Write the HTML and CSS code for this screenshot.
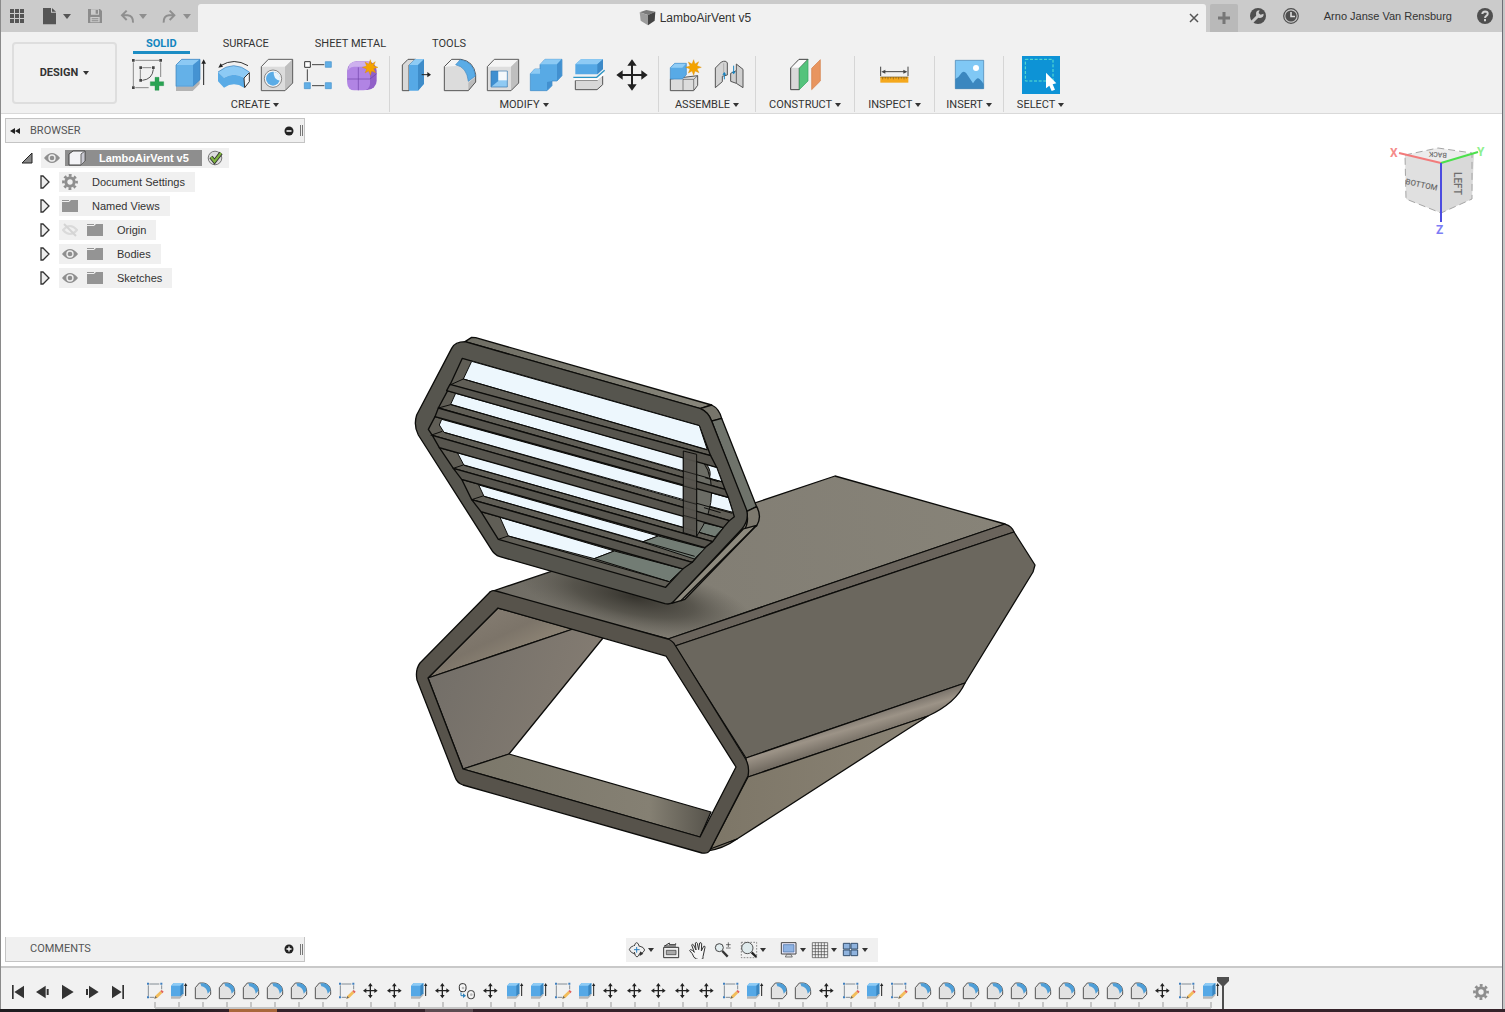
FILE: index.html
```html
<!DOCTYPE html>
<html lang="en">
<head>
<meta charset="utf-8">
<title>LamboAirVent v5</title>
<link rel="stylesheet" href="styles.css">
</head>
<body>
<svg class="defs" aria-hidden="true">
  <symbol id="t-sketch" viewBox="435 153 60 60">
    <path d="M448 162h30M445 166v33M449 202h14M485 166v12" fill="none" stroke="#4d5a66" stroke-width="2"/>
    <path d="M441 158h6v6h-6zM481 158h6v6h-6zM441 199h6v6h-6z" fill="#3f7fbf"/>
    <path d="M463 206l3-9 15-14 6 6-15 15z" fill="#f3bd5b"/><path d="M481 183l4-3 6 5-4 5z" fill="#e0605a"/><path d="M463 206l3-8 5 5z" fill="#666"/>
  </symbol>
  <symbol id="t-extrude" viewBox="507 153 60 60">
    <path d="M513 199v7h27l10-10v-7l-10 10z" fill="#b8b8b8"/>
    <path d="M513 167l8-8h29v31l-9 9h-28z" fill="#55a8e6"/><path d="M513 167l8-8h29l-9 8z" fill="#8ecbf5"/><path d="M541 167l9-8v31l-9 9z" fill="#3a86c0"/>
    <path d="M557 198v-32" stroke="#222" stroke-width="3"/><path d="M552 168l5-9 5 9z" fill="#222"/>
  </symbol>
  <symbol id="t-fillet" viewBox="579 153 60 60">
    <path d="M586 173l12-14h12c14 2 22 12 22 25v9l-12 13h-34z" fill="#e2e2e2" stroke="#555" stroke-width="3" stroke-linejoin="round"/>
    <path d="M601 160h10c14 2 20 11 20 22l-8 9c-1-13-8-20-19-22z" fill="#4f9fd8"/>
  </symbol>
  <symbol id="t-move" viewBox="1083 153 60 60">
    <path d="M1111 166v33M1095 182h33" stroke="#222" stroke-width="4"/>
    <path d="M1111 159l7 10h-14zM1111 205l7-10h-14zM1089 182l10-7v14zM1133 182l-10-7v14z" fill="#222"/>
  </symbol>
  <symbol id="t-joint" viewBox="201 33 60 60">
    <rect x="208" y="41" width="20" height="24" rx="8" fill="#f6f6f6" stroke="#333" stroke-width="3"/><circle cx="219" cy="54" r="4" fill="#bbb"/>
    <rect x="233" y="62" width="20" height="24" rx="8" fill="#f6f6f6" stroke="#333" stroke-width="3"/><circle cx="244" cy="74" r="4" fill="#bbb"/>
    <path d="M213 67v10h8" fill="none" stroke="#2a7fb8" stroke-width="3"/><path d="M219 70l9 7-9 7z" fill="#2a7fb8"/>
  </symbol>
  <symbol id="i-eye" viewBox="0 0 16 16">
    <path d="M0 8q8-10 16 0-8 10-16 0z" fill="#8f8f8f"/><circle cx="8" cy="8" r="3" fill="#8f8f8f" stroke="#eee" stroke-width="1.4"/>
  </symbol>
  <symbol id="i-eyeoff" viewBox="0 0 16 16">
    <path d="M1 8q7-8 14 0-7 8-14 0z" fill="none" stroke="#dadada" stroke-width="2"/><path d="M2 2l12 12" stroke="#d4d4d4" stroke-width="2"/>
  </symbol>
  <symbol id="i-folder" viewBox="0 0 16 16"><path d="M0 2h7v1H0zM0 4h7l2-2h7v12H0z" fill="#949494"/></symbol>
  <symbol id="i-gear" viewBox="0 0 16 16">
    <circle cx="8" cy="8" r="4.2" fill="none" stroke="#8e8e8e" stroke-width="3"/>
    <circle cx="8" cy="8" r="6.6" fill="none" stroke="#8e8e8e" stroke-width="2.6" stroke-dasharray="2.8 2.384" stroke-dashoffset="1.4"/>
  </symbol>
  <symbol id="i-closed" viewBox="0 0 10 14"><path d="M1 1h2l6 6-6 6H1z" fill="#eee" stroke="#333" stroke-width="1.3"/></symbol>
</svg>

<div class="app">
  <header class="titlebar">
    <div class="quick">
      <button title="Data panel"><svg width="20" height="24" viewBox="21 12 60 72"><path d="M30 27h12v12H30zM45 27h12v12H45zM60 27h12v12H60zM30 42h12v12H30zM45 42h12v12H45zM60 42h12v12H60zM30 57h12v12H30zM45 57h12v12H45zM60 57h12v12H60z" fill="#555"/></svg></button>
      <button title="File"><svg width="20" height="24" viewBox="117 12 60 72"><path d="M129 24h24v14h15v35h-39zM156 24l12 11h-12z" fill="#555"/></svg><i class="caret big"></i></button>
      <button title="Save"><svg width="20" height="24" viewBox="249 12 60 72"><path d="M264 27h36l6 6v36h-42z" fill="#8c8c8c"/><path d="M273 28h24v16h-24zM271 51h28v16h-28z" fill="#cbcbcb"/><path d="M287 30h7v11h-7zM275 55h20v3h-20zM275 61h20v3h-20z" fill="#8c8c8c"/></svg></button>
      <button title="Undo"><svg width="20" height="24" viewBox="345 12 60 72"><path d="M380 32l-14 14 14 14M367 46h16q17 2 16 22" fill="none" stroke="#8f8f8f" stroke-width="6"/></svg><i class="caret big dim"></i></button>
      <button title="Redo"><svg width="20" height="24" viewBox="477 12 60 72"><path d="M509 32l14 14-14 14M522 46h-15q-17 2-16 22" fill="none" stroke="#8f8f8f" stroke-width="6"/></svg><i class="caret big dim"></i></button>
    </div>
    <div class="doc-tab">
      <div class="doc-title"><svg width="18" height="18" viewBox="760 27 54 54"><path d="M762 37l20-7 27 5-22 10z" fill="#7a7a7a"/><path d="M762 37l25 8v31l-22-14z" fill="#9c9c9c"/><path d="M787 45l22-10-2 27-20 14z" fill="#444"/></svg><span>LamboAirVent v5</span></div>
      <button class="close" title="Close"><svg width="16" height="16" viewBox="0 0 16 16"><path d="M4 4l8 8M12 4l-8 8" stroke="#555" stroke-width="1.5"/></svg></button>
    </div>
    <button class="new-tab" title="New design"><svg width="14" height="14" viewBox="0 0 14 14"><path d="M7 1v12M1 7h12" stroke="#777" stroke-width="3"/></svg></button>
    <div class="account">
      <button title="Extensions"><svg width="20" height="20" viewBox="0 0 20 20"><circle cx="10" cy="10" r="8" fill="#4f4f4f"/><path d="M4 16l6-6" stroke="#cbcbcb" stroke-width="3"/><path d="M15.600 7.800a3.800 3.800 0 1 1-4-3.500l-1 2.800 2 1.700z" fill="#cbcbcb"/></svg></button>
      <button title="Job status"><svg width="20" height="20" viewBox="0 0 20 20"><circle cx="10" cy="10" r="7.300" fill="none" stroke="#4f4f4f" stroke-width="1.200"/><circle cx="10" cy="10" r="5.600" fill="#4f4f4f"/><path d="M10 6v4.500h4" fill="none" stroke="#ddd" stroke-width="1.600"/></svg></button>
      <a class="user" href="#">Arno Janse Van Rensburg</a>
      <button title="Help"><svg width="20" height="20" viewBox="0 0 20 20"><circle cx="10" cy="10" r="8" fill="#4f4f4f"/><path d="M7.300 8q.2-2.600 2.800-2.600 2.700.1 2.600 2.400-.1 1.300-1.400 2.100-1.200.7-1.200 2" fill="none" stroke="#d4d4d4" stroke-width="2"/><path d="M9 13h2v2.200H9z" fill="#d4d4d4"/></svg></button>
    </div>
  </header>

  <section class="ribbon">
    <button class="design">DESIGN <i class="caret"></i></button>
    <div class="tools">
      <nav class="tabs">
        <a class="active" href="#">SOLID</a><a href="#">SURFACE</a><a href="#">SHEET METAL</a><a href="#">TOOLS</a>
      </nav>
      <div class="groups">
        <div class="group">
          <div class="icons">
            <button title="Create Sketch"><svg width="37" height="38" viewBox="387 168 111 114"><path d="M406 181h72M400 187v71M406 263h40M482 187v44M427 203h27M421 208v30" fill="none" stroke="#555" stroke-width="2"/><path d="M460 208q-3 30-33 33" fill="none" stroke="#555" stroke-width="3"/><path d="M396 177h8v8h-8zM478 177h8v8h-8zM396 259h8v8h-8zM418 199h8v8h-8zM456 199h8v8h-8zM418 237h8v8h-8z" fill="#444"/><path d="M465 232h12v13h14v12h-14v14h-12v-14h-14v-12h14z" fill="#2aa353" stroke="#178a40"/></svg></button>
            <button title="Extrude"><svg width="37" height="38" viewBox="516 168 111 114"><path d="M528 261v12h50l21-21v-12l-21 21z" fill="#b3b3b3"/><path d="M528 195l17-17h55v61l-21 20h-51z" fill="#64b1e8"/><path d="M528 195l17-17h55l-21 17z" fill="#8bc9f4"/><path d="M579 195l21-17v61l-21 20z" fill="#4593d2"/><path d="M528 195l17-17h55v61l-21 20h-51z" fill="none" stroke="#3a7fba" stroke-width="2"/><path d="M611 255v-68" stroke="#222" stroke-width="3"/><path d="M604 191l7-13 7 13z" fill="#222"/></svg></button>
            <button title="Revolve"><svg width="37" height="38" viewBox="645 168 111 114"><path d="M662 197q40-25 82 0" fill="none" stroke="#333" stroke-width="3"/><path d="M655 203l7-13 7 10z" fill="#222"/><path d="M654 216q47-38 94 0l-16 17q-30-17-60 0z" fill="#8ccaf5"/><path d="M654 216l18 17q30-17 60 0v30q-30-20-60 0l-18-19z" fill="#5aabe6"/><path d="M654 216q47-38 94 0" fill="none" stroke="#3a7fba" stroke-width="2"/><path d="M732 234l16-16v27l-14 18z" fill="#f6f6f6" stroke="#333" stroke-width="3"/></svg></button>
            <button title="Hole"><svg width="37" height="38" viewBox="774 168 111 114"><path d="M784 200l21-22h73v71l-23 23h-71z" fill="#dcdcdc"/><path d="M784 200l21-22h73l-23 22z" fill="#f5f5f5"/><path d="M855 200l23-22v71l-23 23z" fill="#bfbfbf"/><path d="M784 200l21-22h73v71l-23 23h-71z" fill="none" stroke="#5c5c5c" stroke-width="3"/><circle cx="819" cy="236" r="26" fill="#f4f4f4" stroke="#555" stroke-width="2"/><circle cx="819" cy="236" r="21" fill="#5aace6"/><path d="M821 215q-1 24 19 27 4-22-19-27z" fill="#e8f4fc"/></svg></button>
            <button title="Pattern"><svg width="37" height="38" viewBox="903 168 111 114"><path d="M936 194h37M922 208v35M936 257h37" stroke="#444" stroke-width="3"/><path d="M914 185h17v17h-17z" fill="#fff" stroke="#333" stroke-width="3"/><path d="M976 185h18v17h-18zM913 248h18v18h-18zM976 248h18v18h-18z" fill="#62afe6" stroke="#4390cc" stroke-width="2"/></svg></button>
            <button title="Create Form"><svg width="37" height="38" viewBox="1032 168 111 114"><rect x="1042" y="184" width="88" height="86" rx="28" fill="#9160c8"/><path d="M1043 212q2-28 30-28h36l-4 22h-54z" fill="#cdb0ee"/><rect x="1042" y="200" width="68" height="71" rx="20" fill="#b184e4"/><path d="M1075 202v69M1042 237h68l20-16" fill="none" stroke="#6f42a8" stroke-width="2"/><path d="M1111 179l4 13 11-7-5 12 13 5-13 4 6 12-12-5-4 13-5-13-11 6 5-12-13-5 13-4-5-12 11 6z" fill="#f4a300" stroke="#d98a00"/></svg></button>
          </div>
          <button class="label">CREATE <i class="caret"></i></button>
        </div>
        <div class="group">
          <div class="icons">
            <button title="Press Pull"><svg width="37" height="38" viewBox="39 168 111 114"><path d="M52 195l17-17h22l-19 17v77H52z" fill="#d9d9d9" stroke="#555" stroke-width="3"/><path d="M72 195l18-17h27v73l-18 21H72z" fill="#56a9e6"/><path d="M72 195l18-17h27l-18 17z" fill="#8dcbf5"/><path d="M99 195l18-17v73l-18 21z" fill="#3e8cc9"/><path d="M110 224h20" stroke="#222" stroke-width="3"/><path d="M127 216l11 8-11 8z" fill="#222"/></svg></button>
            <button title="Fillet"><svg width="37" height="38" viewBox="168 168 111 114"><path d="M178 200l22-22h28q38 6 44 46v22l-22 26h-72z" fill="#dcdcdc"/><path d="M178 200l22-22h16q14 6-4 20z" fill="#f5f5f5"/><path d="M250 248l22-18v16l-22 26z" fill="#bbb"/><path d="M178 200l22-22h28q38 6 44 46v22l-22 26h-72z" fill="none" stroke="#555" stroke-width="3"/><path d="M226 179q40 6 45 49l-21 16q-4-42-38-50z" fill="#5aace6" stroke="#3a86c4" stroke-width="2"/></svg></button>
            <button title="Shell"><svg width="37" height="38" viewBox="297 168 111 114"><path d="M307 200l21-22h73v71l-23 23h-71z" fill="#dedede"/><path d="M307 200l21-22h73l-23 22z" fill="#f5f5f5"/><path d="M378 200l23-22v71l-23 23z" fill="#bfbfbf"/><path d="M307 200l21-22h73v71l-23 23h-71z" fill="none" stroke="#5c5c5c" stroke-width="3"/><path d="M318 213h49v48h-49z" fill="#8fcaf3"/><path d="M318 213h22v30l-22 18z" fill="#3f8fd0"/><path d="M340 213h27v28h-27z" fill="#f4f8fb"/><path d="M318 213h49v48h-49z" fill="none" stroke="#3676ac" stroke-width="2"/></svg></button>
            <button title="Combine"><svg width="37" height="38" viewBox="426 168 111 114"><path d="M436 221l13-14h16v-13l15-16h51v49l-15 16h-15v14l-15 15h-50z" fill="#58aae5" stroke="#3a86c4" stroke-width="2"/><path d="M436 221l13-14h16v14zM466 193l14-15h50l-14 15z" fill="#8ccaf4"/><path d="M516 193l14-15v49l-14 15zM486 246l15-3v13l-15 15z" fill="#4290cf"/></svg></button>
            <button title="Split Body"><svg width="37" height="38" viewBox="555 168 111 114"><path d="M571 193l17-15h66v29l-17 16h-66z" fill="#55a8e5"/><path d="M571 193l17-15h66l-17 15z" fill="#8ecbf5"/><path d="M637 193l17-15v29l-17 16z" fill="#3d8ac8"/><path d="M571 241h66l16-14v27l-17 15h-65z" fill="#d8d8d8" stroke="#555" stroke-width="3"/><path d="M567 238h71l20-18" fill="none" stroke="#fff" stroke-width="5"/><path d="M565 232h70l24-21" fill="none" stroke="#2b94c4" stroke-width="4"/></svg></button>
            <button title="Move/Copy"><svg width="37" height="38" viewBox="684 168 111 114"><path d="M741 190v70M706 225h70" stroke="#222" stroke-width="6"/><path d="M741 178l14 19h-28zM741 272l14-19h-28zM694 225l19-14v28zM788 225l-19-14v28z" fill="#222"/></svg></button>
          </div>
          <button class="label">MODIFY <i class="caret"></i></button>
        </div>
        <div class="group">
          <div class="icons">
            <button title="New Component"><svg width="37" height="38" viewBox="846 168 111 114"><path d="M856 237l82-10v29l-12 16h-70z" fill="#dcdcdc" stroke="#555" stroke-width="3"/><path d="M894 237v34M894 238h32l12-11M926 238v32" fill="none" stroke="#555" stroke-width="2"/><path d="M856 203l13-13h35v34l-12 13h-36z" fill="#58aae6" stroke="#3b85c2" stroke-width="2"/><path d="M857 203l12-12h34l-11 12z" fill="#90ccf5"/><path d="M926 179l4 13 11-7-5 12 13 5-13 4 6 12-12-5-4 13-5-13-11 6 5-12-13-5 13-4-5-12 11 6z" fill="#f4a300" stroke="#d98a00"/></svg></button>
            <button title="Joint"><svg width="37" height="38" viewBox="975 168 111 114"><path d="M991 204l18-18q14-6 18 3v36l-15 4v16l-21 18z" fill="#d4d4d4" stroke="#555" stroke-width="3"/><path d="M1016 190v38" stroke="#999" stroke-width="2"/><path d="M1074 263v-55l-20-16v20l-17 8v24l17 6z" fill="#cfcfcf" stroke="#555" stroke-width="3"/><path d="M1054 212v38" stroke="#666" stroke-width="3"/><path d="M1018 238v-18M1046 197v22" stroke="#1683c0" stroke-width="3"/><path d="M1012 224l6-8 6 8zM1040 215l6 8 6-8z" fill="#1683c0"/></svg></button>
          </div>
          <button class="label">ASSEMBLE <i class="caret"></i></button>
        </div>
        <div class="group narrow">
          <div class="icons">
            <button title="Offset Plane"><svg width="37" height="38" viewBox="110 168 111 114"><path d="M121 204l25-26h27l-26 26v65h-26z" fill="#d9d9d9" stroke="#444" stroke-width="3"/><path d="M123 203l24-23h22l-22 23z" fill="#fafafa"/><path d="M147 205l26-26v64l-26 26z" fill="#54c37c" stroke="#35a55f" stroke-width="2"/><path d="M184 205l26-26v64l-26 26z" fill="#e8955f" stroke="#d37c45" stroke-width="2"/></svg></button>
          </div>
          <button class="label">CONSTRUCT <i class="caret"></i></button>
        </div>
        <div class="group narrow">
          <div class="icons">
            <button title="Measure"><svg width="37" height="38" viewBox="377 168 111 114"><path d="M391 200v28M473 200v28M398 215h68" stroke="#444" stroke-width="3"/><path d="M393 215l12-6v12zM471 215l-12-6v12z" fill="#444"/><path d="M390 231h84v17h-84z" fill="#f5a81c"/><path d="M390 231h84M397 231v7M405 231v5M413 231v7M421 231v5M429 231v7M437 231v5M445 231v7M453 231v5M461 231v7M468 231v5" stroke="#7a5a20" stroke-width="2"/></svg></button>
          </div>
          <button class="label">INSPECT <i class="caret"></i></button>
        </div>
        <div class="group snug">
          <div class="icons">
            <button title="Insert"><svg width="37" height="38" viewBox="597 168 111 114"><path d="M610 181h85v85h-85z" fill="#80c8f5"/><path d="M610 237q11-6 19-19 8-6 14 2l20 30q9-14 14-15 7 0 18 17v14h-85z" fill="#3b87bf"/><circle cx="672" cy="204" r="9" fill="#fff"/><path d="M610 181h85v85h-85z" fill="none" stroke="#3f7fae" stroke-width="2"/></svg></button>
          </div>
          <button class="label">INSERT <i class="caret"></i></button>
        </div>
        <div class="group narrow">
          <div class="icons">
            <button class="selected" title="Select"><svg width="38" height="38" viewBox="813 168 114 114"><path d="M823 178h83v65h-83z" fill="none" stroke="#5fe3cf" stroke-width="3" stroke-dasharray="9 5"/><path d="M885 218v47l10-8 7 16 10-4-7-16 11-3z" fill="#fff"/></svg></button>
          </div>
          <button class="label">SELECT <i class="caret"></i></button>
        </div>
      </div>
    </div>
  </section>

  <main class="canvas">
    <svg class="model" viewBox="1 114 1501 852" role="img" aria-label="Air vent model">
      <defs>
        <linearGradient id="m-top" gradientUnits="userSpaceOnUse" x1="500" y1="600" x2="1000" y2="520"><stop offset="0" stop-color="#6f6c64"/><stop offset=".4" stop-color="#827e74"/><stop offset="1" stop-color="#878378"/></linearGradient>
        <radialGradient id="m-shade"><stop offset="0" stop-color="#33312b" stop-opacity=".95"/><stop offset=".5" stop-color="#3f3d36" stop-opacity=".6"/><stop offset="1" stop-color="#55524b" stop-opacity="0"/></radialGradient>
        <linearGradient id="m-bevel" gradientUnits="userSpaceOnUse" x1="840" y1="717" x2="848" y2="744"><stop offset="0" stop-color="#6d6760"/><stop offset=".5" stop-color="#9c9387"/><stop offset="1" stop-color="#756e64"/></linearGradient>
        <linearGradient id="m-under" x1="0" y1="0" x2="1" y2="0"><stop offset="0" stop-color="#7d7667"/><stop offset="1" stop-color="#8a8375"/></linearGradient>
        <linearGradient id="m-in1" x1="0" y1="0" x2="1" y2="1"><stop offset="0" stop-color="#8b8378"/><stop offset=".45" stop-color="#7c7469"/><stop offset=".6" stop-color="#898072"/><stop offset="1" stop-color="#8a8175"/></linearGradient>
        <linearGradient id="m-in2" x1="0" y1="0" x2="1" y2=".3"><stop offset="0" stop-color="#716d67"/><stop offset="1" stop-color="#847c72"/></linearGradient>
        <linearGradient id="m-in3" x1="0" y1="0" x2="1" y2="0"><stop offset="0" stop-color="#7b776a"/><stop offset=".75" stop-color="#858073"/><stop offset="1" stop-color="#56534b"/></linearGradient>
        <linearGradient id="v-top" x1="0" y1="0" x2="1" y2="0"><stop offset="0" stop-color="#6f6e64"/><stop offset="1" stop-color="#88867b"/></linearGradient>
        <clipPath id="m-clip"><path d="M490 592L835 476l170 48-337 115z"/></clipPath>
      </defs>
      <g stroke="#0c0c0a" stroke-width="1.300" stroke-linejoin="round">
        <path d="M490 592L835 476l170 48-337 115z" fill="url(#m-top)"/>
        <g clip-path="url(#m-clip)" stroke="none"><ellipse cx="634" cy="597" rx="122" ry="34" transform="rotate(12 634 597)" fill="url(#m-shade)"/></g>
        <path d="M668 639l337-115q7 2 9 8L675 646z" fill="#6a645c"/>
        <path d="M675 646l339-114 21 33-2 7-68 111-219 75z" fill="#6b675e"/>
        <path d="M746 758l219-75q-9 20-37 33l-180 61z" fill="url(#m-bevel)"/>
        <path d="M748 777l180-61-191 123-27 11z" fill="url(#m-under)"/>
        <path d="M710 849l27-10q-14 10-30 12z" fill="#777064"/>
        <path d="M498 608l75 21-145 49z" fill="url(#m-in1)"/>
        <path d="M428 678l145-49 30 9-94 116-46 15z" fill="url(#m-in2)"/>
        <path d="M463 769l46-15 202 58-11 25z" fill="url(#m-in3)"/>
        <path fill-rule="evenodd" fill="#57534b" d="M420 663l70-71q2-2 6-1l172 48q5 2 7 6l70 113q5 8 3 18l-38 74q-2 4-8 3l-239-68q-6-2-8-8l-38-97q-2-10 3-17zM498 608l-70 70 35 91 237 68 36-70-70-111z"/>
      </g>
      <g transform="translate(400 325) scale(.3333)" stroke="#0c0c0a" stroke-width="4" stroke-linejoin="round">
        <path d="M195 50l20-13 12 1 708 202-35 11z" fill="url(#v-top)"/>
        <path d="M900 251l35-11q22 10 30 40l-30 10q-7-28-35-39z" fill="#77756b"/>
        <path d="M935 288l30-8 105 265-31 15z" fill="#6f736b"/>
        <path d="M1039 560l31-15q17 30 0 58l-38 15q17-30 7-58z" fill="#7d796e"/>
        <path d="M1030 612l40-11-215 222-40 12z" fill="#8d897d"/>
        <path d="M1070 601L842 828" fill="none"/>
        <path fill="#56554e" d="M155 70q10-20 40-20l705 200q25 10 35 38l105 267q8 32-15 58L820 830q-8 10-25 6L300 695q-17-5-28-25L55 330q-15-28-5-60z"/>
        <g fill="#605e56">
          <path d="M187 100l711 202 34 90L150 180z"/><path d="M143 197l807 230 25 66L115 249z"/><path d="M105 275l880 242 18 58-15 12L97 331l-12-18z"/>
          <path d="M118 368l852 240-32 42L160 430z"/><path d="M185 463l730 205-38 44-662-188z"/><path d="M243 560l605 172-51 55-502-144z"/>
        </g>
        <g fill="#edf7fd" stroke-width="3">
          <path d="M215 109l683 193 24 72L190 162z"/><path d="M167 205l683 193v42L152 238z"/><path d="M125 283l725 200v44L132 322l-14-22z"/>
          <path d="M172 383l678 186v38L192 421z"/><path d="M236 480l539 153-48 18-475-137z"/><path d="M300 577l343 101-60 23-258-68z"/>
          <path d="M920 418l30 9 16 43-38-10q8-20-8-42zM935 504l50 14 14 44-73-19z"/>
        </g>
        <g fill="#727c74" stroke-width="3">
          <path d="M775 633l140 37-32 32-156-51z"/><path d="M643 678l205 54-40 38-225-69z"/><path d="M912 594l58 14-25 28-48-14z"/>
        </g>
        <path d="M890 388q44 40 45 110t-45 136z" fill="#6c6d66" stroke-width="3"/>
        <g fill="#57554e">
          <path d="M140 197l10-19 782 214 18 35z"/><path d="M105 275l10-26 860 244 10 24z"/><path d="M118 368l-21-37 891 256-18 21z"/>
          <path d="M185 463l-25-33 778 220-23 18z"/><path d="M243 560l-28-36 662 188-29 20z"/>
        </g>
        <path d="M190 162l732 213M152 239l815 232M132 322l865 243M192 420l700 200M252 514l632 180M325 633l482 137M150 180l40-18M115 249l37-10M92 331l35-12M160 430l30-10M215 524l37-12M295 643l30-10M915 458l40 12M912 548l50 15M897 622l50 14" fill="none" stroke-width="3"/>
        <path d="M850 378l40 10v247l-40-12z" fill="#57554e" fill-opacity=".92" stroke-width="3"/>
        <path d="M850 438l40 11M850 483l40 11M850 527l40 11M850 571l40 11" fill="none" stroke-width="2"/>
      </g>
    </svg>

    <svg class="cube" width="110" height="100" viewBox="1385 140 110 100" role="img" aria-label="View cube">
      <path d="M1405 155l33-7 36 6-33 9z" fill="#ececec"/><path d="M1405 155l36 8v50l-35-14z" fill="#e0e0e0"/><path d="M1441 163l33-10-2 46-31 14z" fill="#d9d9d9"/>
      <path d="M1405 155l33-7 34 5v46l-31 14-35-14z" fill="none" stroke="#a5a5a5" stroke-dasharray="7 4"/>
      <path d="M1399 153l42 10" stroke="#f27b7b" stroke-width="2"/><path d="M1441 163l37-11" stroke="#4ce04c" stroke-width="2"/><path d="M1441 163v59" stroke="#4c4ce0" stroke-width="2"/>
      <g class="cube-text"><text x="1405" y="184" font-size="8" transform="rotate(12 1405 184)">BOTTOM</text><text x="1454" y="172" font-size="10" transform="rotate(90 1454 172)">LEFT</text><text x="1447" y="153" font-size="7" transform="rotate(184 1447 153)">BACK</text></g>
      <g class="axis-text"><text x="1390" y="157" fill="#f58b8b">X</text><text x="1477" y="156" fill="#8df08d">Y</text><text x="1436" y="234" fill="#7d7df5">Z</text></g>
    </svg>

    <aside class="browser">
      <div class="panel-head">
        <button title="Collapse"><svg width="12" height="10" viewBox="0 0 12 10"><path d="M6 2v6L1 5zM11 2v6L6 5z" fill="#222"/></svg></button>
        <h2>BROWSER</h2>
        <button title="Hide"><svg width="10" height="10" viewBox="0 0 10 10"><circle cx="5" cy="5" r="4.500" fill="#222"/><path d="M2.500 5h5" stroke="#fff" stroke-width="1.500"/></svg></button>
        <i class="grip"></i>
      </div>
      <ul class="tree">
        <li class="root"><svg width="12" height="12" viewBox="0 0 12 12"><path d="M11 1v10H1z" fill="#888" stroke="#222"/></svg>
          <span class="node"><svg width="16" height="16"><use href="#i-eye"/></svg><span class="picked"><svg width="18" height="16" viewBox="0 0 18 16"><path d="M1 4l4-3h12v10l-4 4H1z" fill="#f3f3f6" stroke="#444"/><path d="M13 4l4-3v10l-4 4z" fill="#c9c9d2" stroke="#666"/></svg><b>LamboAirVent v5</b></span><svg width="16" height="16" viewBox="0 0 16 16"><circle cx="8" cy="8" r="6.800" fill="#dcdcdc" stroke="#777"/><path d="M4 7l3.500 4.500L14 3" fill="none" stroke="#333" stroke-width="4"/><path d="M4 7l3.500 4.500L14 3" fill="none" stroke="#7fb53f" stroke-width="2.200"/></svg></span></li>
        <li><svg width="10" height="14"><use href="#i-closed"/></svg><span class="node"><svg width="16" height="16"><use href="#i-gear"/></svg><span class="name">Document Settings</span></span></li>
        <li><svg width="10" height="14"><use href="#i-closed"/></svg><span class="node"><svg width="16" height="16"><use href="#i-folder"/></svg><span class="name">Named Views</span></span></li>
        <li><svg width="10" height="14"><use href="#i-closed"/></svg><span class="node"><svg width="16" height="16"><use href="#i-eyeoff"/></svg><svg width="16" height="16"><use href="#i-folder"/></svg><span class="name">Origin</span></span></li>
        <li><svg width="10" height="14"><use href="#i-closed"/></svg><span class="node"><svg width="16" height="16"><use href="#i-eye"/></svg><svg width="16" height="16"><use href="#i-folder"/></svg><span class="name">Bodies</span></span></li>
        <li><svg width="10" height="14"><use href="#i-closed"/></svg><span class="node"><svg width="16" height="16"><use href="#i-eye"/></svg><svg width="16" height="16"><use href="#i-folder"/></svg><span class="name">Sketches</span></span></li>
      </ul>
    </aside>

    <section class="comments panel-head">
      <h2>COMMENTS</h2>
      <button title="Show"><svg width="10" height="10" viewBox="0 0 10 10"><circle cx="5" cy="5" r="4.500" fill="#222"/><path d="M2.500 5h5M5 2.500v5" stroke="#fff" stroke-width="1.300"/></svg></button>
      <i class="grip"></i>
    </section>

    <div class="navbar">
      <div class="nav-group">
        <button title="Orbit"><svg width="18" height="18" viewBox="81 33 54 54"><path d="M98 47q-12 4-13 12 4 10 17 13M114 72q15-3 17-12-2-9-16-12" fill="none" stroke="#444" stroke-width="3"/><path d="M100 48q2-10 7-10t8 12M100 66q2 14 8 15 5-2 7-9" fill="none" stroke="#444" stroke-width="3"/><path d="M99 59h17M107 51v17" stroke="#2b80c0" stroke-width="3"/><path d="M117 64l-1 14 11-7z" fill="#333"/></svg><i class="caret"></i></button>
        <button title="Look At"><svg width="18" height="18" viewBox="180 33 54 54"><path d="M185 52h45v31h-45z" fill="#eee" stroke="#333" stroke-width="3"/><path d="M193 61h29v13h-29z" fill="#a9a9a9" stroke="#333" stroke-width="2"/><path d="M188 48l14-9v5h19v-4M186 48h36" fill="none" stroke="#333" stroke-width="3"/></svg></button>
        <button title="Pan"><svg width="18" height="18" viewBox="258 33 54 54"><path d="M276 82q-4-12-13-20 1-6 8-1l6 6-8-22q2-5 6 0l7 15-2-21q4-4 6 1l4 19 3-20q5-3 6 2l-1 22 7-14q5-2 4 3l-6 28v6q-12 8-27-4z" fill="#f6f6f6" stroke="#333" stroke-width="3" stroke-linejoin="round"/></svg></button>
        <button title="Zoom"><svg width="18" height="18" viewBox="336 33 54 54"><circle cx="352" cy="53" r="12" fill="#e4eef0" stroke="#444" stroke-width="3"/><path d="M361 63l16 17" stroke="#333" stroke-width="7"/><path d="M372 44h14M379 37v14M372 54h14" stroke="#333" stroke-width="2"/></svg></button>
        <button title="Zoom Window"><svg width="18" height="18" viewBox="414 33 54 54"><path d="M418 37h46v46h-46z" fill="none" stroke="#555" stroke-width="2" stroke-dasharray="5 4"/><circle cx="436" cy="54" r="17" fill="#dfeaec" stroke="#555" stroke-width="3"/><path d="M449 67l14 14" stroke="#222" stroke-width="7"/></svg><i class="caret"></i></button>
      </div>
      <div class="nav-group tight">
        <button title="Display Settings"><svg width="18" height="18" viewBox="537 33 54 54"><path d="M541 38h44v34h-44z" fill="#eef" stroke="#444" stroke-width="3"/><path d="M547 44h32v22h-32z" fill="#8fb3e3" stroke="#446a9e" stroke-width="2"/><path d="M557 73h13l4 8h-21z" fill="#ddd" stroke="#444" stroke-width="2"/></svg><i class="caret"></i></button>
        <button title="Grid and Snaps"><svg width="18" height="18" viewBox="630 33 54 54"><path d="M634 38h46v45h-46zM634 47h46M634 56h46M634 65h46M634 74h46M643 38v45M652 38v45M661 38v45M670 38v45" fill="#f3f3f3" stroke="#444" stroke-width="2"/></svg><i class="caret"></i></button>
        <button title="Viewports"><svg width="18" height="18" viewBox="723 33 54 54"><path d="M727 40h20v17h-20zM750 40h20v17h-20zM727 60h20v17h-20zM750 60h20v17h-20z" fill="#8fb3de" stroke="#35506f" stroke-width="3"/></svg><i class="caret"></i></button>
      </div>
    </div>
  </main>

  <footer class="timeline">
    <div class="playback">
      <button title="Go to start"><svg width="25" height="20" viewBox="15 156 75 60"><path d="M36 165h5v42h-5zM72 167v38l-29-19z" fill="#333"/></svg></button>
      <button title="Step back"><svg width="25" height="20" viewBox="90 156 75 60"><path d="M137 167v38l-29-19zM140 177h6v18h-6z" fill="#333"/></svg></button>
      <button title="Play"><svg width="25" height="20" viewBox="165 156 75 60"><path d="M186 164v44l35-22z" fill="#333"/></svg></button>
      <button title="Step forward"><svg width="25" height="20" viewBox="240 156 75 60"><path d="M267 167v38l29-19zM258 177h6v18h-6z" fill="#333"/></svg></button>
      <button title="Go to end"><svg width="25" height="20" viewBox="315 156 75 60"><path d="M367 165h5v42h-5zM336 167v38l29-19z" fill="#333"/></svg></button>
    </div>
    <ol class="ops">
      <li><svg><use href="#t-sketch"/></svg></li>
      <li><svg><use href="#t-extrude"/></svg></li>
      <li><svg><use href="#t-fillet"/></svg></li>
      <li><svg><use href="#t-fillet"/></svg></li>
      <li><svg><use href="#t-fillet"/></svg></li>
      <li><svg><use href="#t-fillet"/></svg></li>
      <li><svg><use href="#t-fillet"/></svg></li>
      <li><svg><use href="#t-fillet"/></svg></li>
      <li><svg><use href="#t-sketch"/></svg></li>
      <li><svg><use href="#t-move"/></svg></li>
      <li><svg><use href="#t-move"/></svg></li>
      <li><svg><use href="#t-extrude"/></svg></li>
      <li><svg><use href="#t-move"/></svg></li>
      <li><svg><use href="#t-joint"/></svg></li>
      <li><svg><use href="#t-move"/></svg></li>
      <li><svg><use href="#t-extrude"/></svg></li>
      <li><svg><use href="#t-extrude"/></svg></li>
      <li><svg><use href="#t-sketch"/></svg></li>
      <li><svg><use href="#t-extrude"/></svg></li>
      <li><svg><use href="#t-move"/></svg></li>
      <li><svg><use href="#t-move"/></svg></li>
      <li><svg><use href="#t-move"/></svg></li>
      <li><svg><use href="#t-move"/></svg></li>
      <li><svg><use href="#t-move"/></svg></li>
      <li><svg><use href="#t-sketch"/></svg></li>
      <li><svg><use href="#t-extrude"/></svg></li>
      <li><svg><use href="#t-fillet"/></svg></li>
      <li><svg><use href="#t-fillet"/></svg></li>
      <li><svg><use href="#t-move"/></svg></li>
      <li><svg><use href="#t-sketch"/></svg></li>
      <li><svg><use href="#t-extrude"/></svg></li>
      <li><svg><use href="#t-sketch"/></svg></li>
      <li><svg><use href="#t-fillet"/></svg></li>
      <li><svg><use href="#t-fillet"/></svg></li>
      <li><svg><use href="#t-fillet"/></svg></li>
      <li><svg><use href="#t-fillet"/></svg></li>
      <li><svg><use href="#t-fillet"/></svg></li>
      <li><svg><use href="#t-fillet"/></svg></li>
      <li><svg><use href="#t-fillet"/></svg></li>
      <li><svg><use href="#t-fillet"/></svg></li>
      <li><svg><use href="#t-fillet"/></svg></li>
      <li><svg><use href="#t-fillet"/></svg></li>
      <li><svg><use href="#t-move"/></svg></li>
      <li><svg><use href="#t-sketch"/></svg></li>
      <li><svg><use href="#t-extrude"/></svg></li>
    </ol>
    <svg class="marker" width="12" height="32" viewBox="0 0 12 32"><path d="M0 0h12v4L7 9v23H5V9L0 4z" fill="#4f4f4f"/></svg>
    <button class="settings" title="Timeline settings"><svg width="16" height="16"><use href="#i-gear"/></svg></button>
  </footer>
</div>
<div class="desk"></div>
</body>
</html>
```

FILE: styles.css
```css
* { box-sizing: border-box; }

body {
  margin: 0;
  min-height: 100vh;
  display: flex;
  flex-direction: column;
  background: #c6c6c6;
  color: #333;
  font: 11px/14px "Liberation Sans", Arial, sans-serif;
}

button {
  display: flex;
  align-items: center;
  justify-content: center;
  padding: 0;
  border: 0;
  background: none;
  color: inherit;
  font: inherit;
}

a { color: inherit; text-decoration: none; }
ul, ol { margin: 0; padding: 0; list-style: none; }
h2 { margin: 0; font: inherit; }
svg { display: block; flex: none; }
.defs { position: absolute; width: 0; height: 0; }

.app {
  flex: 1;
  display: flex;
  flex-direction: column;
  margin-right: 2px;
  border-left: 1px solid #8a8a8a;
  border-right: 1px solid #6e6e76;
  background: #fff;
}

.caret {
  border: 3px solid transparent;
  border-top: 4px solid #333;
  border-bottom: 0;
}
.caret.big { border-width: 5px 4px 0; border-top-color: #555; }
.caret.dim { border-top-color: #8f8f8f; }

/* Title bar */
.titlebar {
  display: flex;
  height: 32px;
  padding-top: 4px;
  background: #cbcbcb;
}
.quick {
  display: flex;
  gap: 12px;
  padding: 0 7px 4px 6px;
}
.quick button { gap: 4px; }
.doc-tab {
  flex: 1;
  display: flex;
  align-items: center;
  padding: 0 4px 0 6px;
  border-radius: 3px 3px 0 0;
  background: #f1f1f1;
}
.doc-title {
  flex: 1;
  display: flex;
  align-items: center;
  justify-content: center;
  gap: 3px;
  font-size: 12px;
}
.new-tab {
  width: 28px;
  margin-left: 4px;
  background: #b9b9b9;
  border-radius: 2px 2px 0 0;
}
.account {
  display: flex;
  align-items: center;
  gap: 13px;
  padding: 0 7px 4px 10px;
}
.user { padding: 0 10px; }

/* Ribbon */
.ribbon {
  display: flex;
  gap: 4px;
  height: 82px;
  padding-left: 11px;
  border-bottom: 1px solid #d9d9d9;
  background: #f1f1f1;
  font-family: Roboto, "Liberation Sans", sans-serif;
}
.design {
  gap: 5px;
  width: 105px;
  height: 62px;
  margin-top: 10px;
  border: 2px solid #dedede;
  border-radius: 4px;
  font-weight: 700;
}
.tabs {
  display: flex;
  gap: 20px;
  height: 22px;
  padding-left: 12px;
}
.tabs a { padding: 5px 13px 0; }
.tabs .active {
  border-bottom: 3px solid #1c8dc4;
  color: #1486c0;
  font-weight: 700;
}
.groups { display: flex; padding-top: 2px; }
.group {
  display: flex;
  flex-direction: column;
  align-items: center;
  gap: 4px;
  padding: 0 5px;
  border-right: 1px solid #d6d6d6;
}
.group:last-child { border-right: 0; }
.icons { display: flex; }
.icons button { width: 43px; height: 38px; }
.icons .selected { width: 38px; background: #0d93d6; }
.label { gap: 3px; height: 14px; }
.narrow .label { padding: 0 8px; }
.snug .label { padding: 0 6px; }

/* Canvas */
.canvas { position: relative; flex: 1; }
.model { position: absolute; inset: 0; width: 100%; height: 100%; }
.cube { position: absolute; top: 26px; right: 7px; }
.cube-text { fill: #6e6e6e; font-family: Roboto, sans-serif; font-weight: 500; }
.axis-text { font: bold 12px Roboto, sans-serif; }

.browser { position: absolute; top: 4px; left: 4px; width: 300px; }
.panel-head {
  display: flex;
  align-items: center;
  height: 25px;
  padding: 0 1px 0 3px;
  border: 1px solid #c4c4c4;
  background: #f0f0f0;
  color: #555;
  font-family: Roboto, "Liberation Sans", sans-serif;
}
.panel-head h2 { flex: 1; padding-left: 9px; }
.grip {
  width: 3px;
  height: 11px;
  margin-left: 6px;
  border: 1px solid #777;
  border-width: 0 1px;
}
.comments {
  position: absolute;
  bottom: 4px;
  left: 4px;
  width: 300px;
  border-top: 0;
}
.comments h2 { padding-left: 21px; }

.tree {
  display: flex;
  flex-direction: column;
  gap: 4px;
  padding-top: 5px;
}
.tree li {
  display: flex;
  align-items: center;
  gap: 9px;
  padding-left: 35px;
}
.tree .root { gap: 8px; padding-left: 16px; }
.node {
  display: flex;
  align-items: center;
  gap: 9px;
  height: 20px;
  padding: 0 10px 0 3px;
  background: #f0f0f0;
}
.root .node { gap: 5px; padding-right: 6px; }
.name { padding-left: 5px; }
.picked {
  display: flex;
  align-items: center;
  gap: 13px;
  height: 16px;
  padding: 0 13px 0 3px;
  background: #8e8e8e;
  color: #fff;
}

.navbar {
  position: absolute;
  bottom: 4px;
  left: 50%;
  translate: -50% 0;
  display: flex;
  gap: 14px;
  height: 24px;
  padding: 0 10px 0 2px;
  background: #f0f0f0;
}
.nav-group { display: flex; gap: 8px; }
.nav-group.tight { gap: 5px; }
.nav-group button { gap: 2px; }

/* Timeline */
.timeline {
  display: flex;
  height: 43px;
  padding-left: 4px;
  border-top: 2px solid #c9c9c9;
  background: #f1f1f1;
}
.playback {
  display: flex;
  align-items: flex-start;
  padding-top: 14px;
}
.ops { display: flex; margin-left: 13px; }
.ops li {
  display: flex;
  flex-direction: column;
  align-items: center;
  width: 24px;
  padding-top: 13px;
  background: linear-gradient(#c6c6c6, #c6c6c6) bottom / 100% 2px no-repeat;
}
.ops li:first-child { background-position: right bottom; background-size: 50% 2px; }
.ops li:last-child { background-position: left bottom; background-size: 50% 2px; }
.ops svg { width: 20px; height: 20px; }
.ops li::after {
  content: "";
  width: 2px;
  height: 6px;
  margin-top: 1px;
  background: #c6c6c6;
}
.marker { margin: 9px 0 0 -6px; }
.settings { margin: 6px 13px 0 auto; }

.desk {
  height: 3px;
  background: linear-gradient(90deg, #1f1d20 0 180px, #35222a 229px, #a9683c 229px 277px, #35222a 277px 425px, #5d4c52 425px 473px, #35222a 473px);
}
```
